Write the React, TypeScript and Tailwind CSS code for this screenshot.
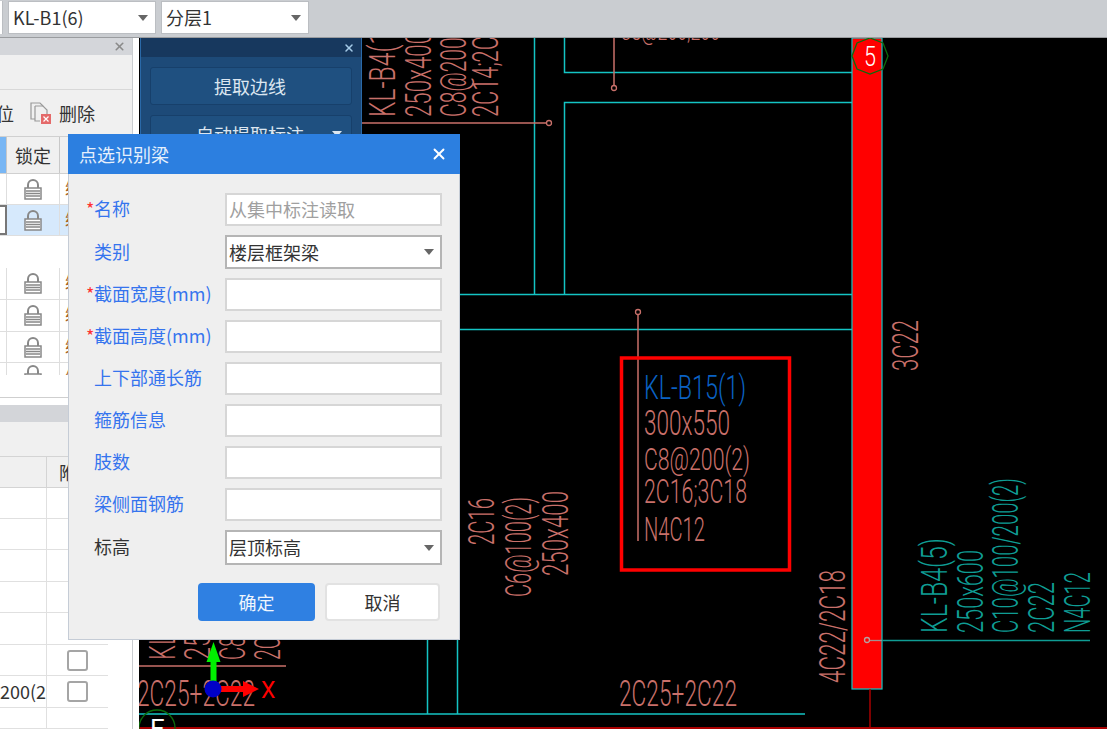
import React from "react";
import { X } from "lucide-react";

const PINK = "#c9706a";
const TEAL = "#0f9d94";
const CYAN = "#14c4c4";

function Caret({ className = "" }: { className?: string }) {
  return (
    <svg width="10" height="6" viewBox="0 0 10 6" className={className}>
      <polygon points="0,0 10,0 5,6" fill="#666" />
    </svg>
  );
}

function LockIcon() {
  return (
    <svg width="18" height="21" viewBox="0 0 18 21" className="shrink-0">
      <path d="M4 9V6a5 5 0 0 1 10 0v3" fill="none" stroke="#888" strokeWidth="2" />
      <rect x="1" y="9" width="16" height="11" fill="#fff" stroke="#888" strokeWidth="1.5" />
      <path d="M2 12h14M2 14.5h14M2 17h14" stroke="#888" strokeWidth="1.3" />
    </svg>
  );
}

function DeleteIcon() {
  return (
    <svg width="22" height="22" viewBox="0 0 22 22" className="shrink-0">
      <path d="M5 17H1V1h9l3 3" fill="none" stroke="#999" strokeWidth="1.2" />
      <path d="M5 4h8l4 4v4M5 4v15h5" fill="none" stroke="#999" strokeWidth="1.2" />
      <rect x="11" y="12" width="10" height="10" fill="#e46a6a" />
      <path d="M13.5 14.5l5 5M18.5 14.5l-5 5" stroke="#fff" strokeWidth="1.2" />
    </svg>
  );
}

function ToolSelect({ label, width }: { label: string; width: string }) {
  return (
    <div className={`flex h-[33px] items-center justify-between border border-[#bbbec2] bg-white pl-[4px] pr-[7px] text-[18px] text-[#333] ${width}`}>
      <span>{label}</span>
      <Caret />
    </div>
  );
}

// cad annotation text, squeezed to the width it has in the drawing
function CadText({ x, y, len, size = 36, color = PINK, vertical = false, children }: {
  x: number;
  y: number;
  len: number;
  size?: number;
  color?: string;
  vertical?: boolean;
  children: string;
}) {
  return (
    <text
      x={x}
      y={y}
      textLength={len}
      lengthAdjust="spacingAndGlyphs"
      fontSize={size}
      fontWeight={300}
      fill={color}
      fontFamily="Roboto, 'Liberation Sans', sans-serif"
      transform={vertical ? `rotate(-90 ${x} ${y})` : undefined}
    >
      {children}
    </text>
  );
}

function Drawing() {
  return (
    <svg width="968" height="691" viewBox="139 38 968 691" className="block">
      <g stroke={CYAN} strokeWidth="1.5" fill="none">
        <path d="M534.5 38V295M564.5 38V72.5H852M564.5 295V102.5H852" />
        <path d="M139 294.5H852M139 329.5H852" />
        <path d="M427.5 640V714M457.5 640V714M139 714H805" />
      </g>
      <rect x="852" y="38" width="30" height="651" fill="#ff0000" stroke={CYAN} strokeWidth="1.2" />
      <path d="M870 689V729" stroke="#a80000" strokeWidth="1.5" />
      <path d="M139 728H1107" stroke="#a80000" strokeWidth="2" />

      <g stroke={PINK} fill="none">
        <path d="M362 123H546M614 38V85.5M638 315V541M139 666H286" strokeWidth="1.5" />
        <circle cx="549" cy="123" r="2.5" strokeWidth="1.3" />
        <circle cx="614" cy="88" r="2.5" strokeWidth="1.3" />
        <circle cx="638" cy="312" r="2.5" strokeWidth="1.3" />
      </g>

      <polygon points="870,38 883,43 888,56 883,69 870,74 857,69 852,56 857,43" fill="none" stroke="#0b6b0b" strokeWidth="1.3" />
      <text x="864" y="66" fontSize="27" fontWeight={300} fill="#fff" fontFamily="Roboto, sans-serif" textLength="12" lengthAdjust="spacingAndGlyphs">5</text>
      <circle cx="157" cy="728" r="18" fill="none" stroke="#0b6b0b" strokeWidth="1.3" />
      <text x="150" y="738" fontSize="26" fill="#fff" fontFamily="Roboto, sans-serif">E</text>

      <CadText x={395} y={117} len={94} vertical>KL-B4(1)</CadText>
      <CadText x={431} y={117} len={85} vertical>250x400</CadText>
      <CadText x={466} y={117} len={105} vertical>C8@200(2)</CadText>
      <CadText x={498} y={117} len={105} vertical>2C14;2C16</CadText>
      <CadText x={620} y={40} len={100} size={26}>C8@200;200</CadText>

      <rect x="621.5" y="358" width="168" height="212" fill="none" stroke="#ff0000" strokeWidth="3.5" />
      <CadText x={644} y={399} len={102} size={33} color="#0a62c4">KL-B15(1)</CadText>
      <CadText x={644} y={435} len={86} size={35}>300x550</CadText>
      <CadText x={644} y={470} len={106} size={32}>C8@200(2)</CadText>
      <CadText x={644} y={503} len={103} size={33}>2C16;3C18</CadText>
      <CadText x={644} y={541} len={61} size={34}>N4C12</CadText>

      <CadText x={494} y={545} len={47} vertical>2C16</CadText>
      <CadText x={531} y={597} len={100} vertical>C6@100(2)</CadText>
      <CadText x={568} y={576} len={85} vertical>250x400</CadText>
      <CadText x={918} y={371} len={51} vertical>3C22</CadText>
      <CadText x={845} y={683} len={113} vertical>4C22/2C18</CadText>
      <CadText x={619} y={706} len={118}>2C25+2C22</CadText>

      <path d="M880 640.5H1090" stroke={TEAL} strokeWidth="1.5" />
      <circle cx="867" cy="640" r="2.5" fill="none" stroke="#b9a0a0" strokeWidth="1.3" />
      <path d="M870 640.5H882" stroke="#a09090" strokeWidth="1.3" />
      <CadText x={947} y={633} len={95} color={TEAL} vertical>KL-B4(5)</CadText>
      <CadText x={983} y={633} len={83} color={TEAL} vertical>250x600</CadText>
      <CadText x={1018} y={633} len={155} color={TEAL} vertical>C10@100/200(2)</CadText>
      <CadText x={1054} y={633} len={51} color={TEAL} vertical>2C22</CadText>
      <CadText x={1090} y={633} len={61} color={TEAL} vertical>N4C12</CadText>

      <CadText x={175} y={660} len={90} vertical>KL-B1(6)</CadText>
      <CadText x={210} y={660} len={90} vertical>250x500</CadText>
      <CadText x={245} y={660} len={100} vertical>C8@200(2)</CadText>
      <CadText x={280} y={660} len={100} vertical>2C25+2C22</CadText>
      <CadText x={137} y={706} len={118}>2C25+2C22</CadText>

      {/* ucs axis */}
      <path d="M210.5 690V662H206.5L213.5 642L220.5 662H216.5V690Z" fill="#00f000" />
      <path d="M220 686H243V681L259 689L243 697V692H220Z" fill="#ff0000" />
      <circle cx="213" cy="689" r="8.5" fill="#0000c8" />
      <text x="261" y="698" fontSize="23" fill="#ff0000" fontFamily="Roboto, sans-serif">X</text>
    </svg>
  );
}

function ExtractPanel() {
  return (
    <div className="absolute left-px top-0 flex h-[460px] w-[222px] flex-col border-x border-[#2a69a8] bg-[#1d4a78] text-[18px] text-[#dce6f0]">
      <div className="flex h-[19px] items-center justify-end bg-[#17385e] pr-[6px]">
        <X size={12} strokeWidth={3} className="text-[#a5cbe8]" />
      </div>
      <div className="flex flex-col gap-[10px] pl-[9px] pr-[9px] pt-[10px]">
        <div className="flex h-[38px] items-center justify-center rounded-[3px] border border-[#17406b] bg-[#1f5080] pr-[2px]">
          提取边线
        </div>
        <div className="relative flex h-[38px] items-center justify-center rounded-[3px] border border-[#17406b] bg-[#1f5080] pr-[2px]">
          自动提取标注
          <svg width="10" height="6" viewBox="0 0 10 6" className="absolute right-[9px] top-[15px]">
            <polygon points="0,0 10,0 5,6" fill="#dce6f0" />
          </svg>
        </div>
      </div>
    </div>
  );
}

const upperRows = [
  { h: "h-[31px]", lock: true },
  { h: "h-[31px]", lock: true, selected: true },
  { h: "h-[32px]", blank: true },
  { h: "h-[32px]", lock: true },
  { h: "h-[32px]", lock: true },
  { h: "h-[31px]", lock: true },
  { h: "h-[12px]", lock: true, cut: true },
];

const lowerRows = [
  { h: "h-[31px]" },
  { h: "h-[31px]" },
  { h: "h-[32px]" },
  { h: "h-[31px]" },
  { h: "h-[32px]" },
  { h: "h-[31px]", check: true },
  { h: "h-[32px]", check: true, text: "200(2" },
  { h: "h-[21px]" },
];

function LeftPanel() {
  return (
    <div className="flex h-full w-[133px] shrink-0 flex-col overflow-hidden border-r border-[#c9ccd0] bg-white text-[18px] text-[#333]">
      <div className="flex h-[17px] shrink-0 items-center justify-end bg-[#d4d6da] pr-[6px]">
        <X size={13} strokeWidth={3} className="text-[#8a8a8a]" />
      </div>
      <div className="h-[35px] shrink-0 border-b border-[#d8d8d8] bg-[#f0f0f0]" />
      <div className="flex h-[47px] shrink-0 items-center justify-end gap-[7px] whitespace-nowrap border-b border-[#d0d0d0] bg-[#f0f0f0] pr-[37px]">
        <span className="mr-[9px] shrink-0">定位</span>
        <DeleteIcon />
        <span className="shrink-0">删除</span>
      </div>
      <div className="flex h-[37px] w-[190px] shrink-0 border-b border-[#d0d0d0] bg-[#f0f0f0]">
        <div className="w-[7px] border-r border-[#c8c8c8] bg-[#78b6f4]" />
        <div className="flex w-[53px] items-center justify-center border-r border-[#c8c8c8]">锁定</div>
      </div>
      <div className="h-[224px] shrink-0 overflow-hidden border-b border-[#cfcfcf]">
        {upperRows.map((row, i) => (
          <div
            key={i}
            className={`flex w-[190px] ${row.h} ${row.blank || row.cut ? "" : "border-b border-[#dedede]"} ${row.selected ? "bg-[#d6e9fc]" : "bg-white"}`}
          >
            {row.blank ? null : (
              <>
                <div className={`w-[7px] ${row.selected ? "border-y-2 border-r-2 border-[#777] bg-white" : "border-r border-[#dedede]"}`} />
                <div className={`flex w-[53px] justify-center overflow-hidden border-r border-[#dedede] ${row.cut ? "items-start pt-[2px]" : "items-center"}`}>
                  <LockIcon />
                </div>
                <div className={`pl-[5px] text-[#a8641e] ${row.cut ? "overflow-hidden" : ""}`}>编</div>
              </>
            )}
          </div>
        ))}
      </div>
      <div className="h-[7px] shrink-0 bg-white" />
      <div className="h-[17px] shrink-0 bg-[#d3d5d9]" />
      <div className="h-[34px] shrink-0 bg-[#f0f0f0]" />
      <div className="flex h-[32px] shrink-0 border-y border-[#d4d4d4] bg-[#f0f0f0]">
        <div className="w-[47px] border-r border-[#d4d4d4]" />
        <div className="flex items-center whitespace-nowrap pl-[12px]">附加</div>
      </div>
      {lowerRows.map((row, i) => (
        <div key={i} className={`flex w-[108px] shrink-0 border-b border-[#e0e0e0] ${row.h}`}>
          <div className="flex w-[47px] items-center overflow-hidden whitespace-nowrap border-r border-[#e0e0e0]">
            {row.text}
          </div>
          <div className="flex flex-1 items-center justify-center">
            {row.check ? <div className="size-[21px] rounded-[3px] border-2 border-[#a5a5a5] bg-white" /> : null}
          </div>
        </div>
      ))}
    </div>
  );
}

const fields = [
  { label: "名称", required: true, placeholder: "从集中标注读取", h: "h-[33px]" },
  { label: "类别", value: "楼层框架梁", select: true, h: "h-[34px]" },
  { label: "截面宽度(mm)", required: true, h: "h-[33px]" },
  { label: "截面高度(mm)", required: true, h: "h-[33px]" },
  { label: "上下部通长筋", h: "h-[33px]" },
  { label: "箍筋信息", h: "h-[33px]" },
  { label: "肢数", h: "h-[33px]" },
  { label: "梁侧面钢筋", h: "h-[33px]" },
  { label: "标高", value: "层顶标高", select: true, dark: true, h: "h-[35px]" },
];

function Dialog() {
  return (
    <div className="absolute left-[68px] top-[134px] flex h-[506px] w-[392px] flex-col border-x border-b border-[#c5ccd6] bg-[#efefef] text-[18px]">
      <div className="-mx-px flex h-[40px] shrink-0 items-center justify-between bg-[#2c7fe0] pl-[11px] pr-[12px] text-[#e6f0fc]">
        <span>点选识别梁</span>
        <X size={18} strokeWidth={2.5} className="text-white" />
      </div>
      <div className="flex flex-col gap-[9px] pl-[17px] pr-[17px] pt-[19px]">
        {fields.map((f) => (
          <div key={f.label} className="flex items-center">
            <div className={`flex w-[139px] shrink-0 whitespace-nowrap pb-[2px] ${f.dark ? "text-[#333]" : "text-[#3574ee]"}`}>
              <span className="w-[8px] text-[#ff3333]">{f.required ? "*" : ""}</span>
              <span>{f.label}</span>
            </div>
            <div
              className={`flex flex-1 items-center justify-between border-2 bg-white pl-[2px] pr-[6px] ${f.h} ${f.select ? "border-[#b5b5b5] text-[#333]" : "border-[#d6d6d6] text-[#a0a0a0]"}`}
            >
              <span>{f.value ?? f.placeholder}</span>
              {f.select ? <Caret /> : null}
            </div>
          </div>
        ))}
        <div className="mt-[9px] flex justify-end gap-[10px] pr-[2px]">
          <button className="h-[38px] w-[117px] rounded-[4px] bg-[#2f80e2] text-[#eef5fd]">确定</button>
          <button className="h-[38px] w-[115px] rounded-[4px] border-2 border-[#e2e2e2] bg-white text-[#333]">取消</button>
        </div>
      </div>
    </div>
  );
}

export default function App() {
  return (
    <div className="relative flex h-[729px] w-[1107px] flex-col overflow-hidden bg-white font-['Noto_Sans_CJK_SC','Noto_Sans',sans-serif]">
      <div className="flex h-[38px] shrink-0 gap-[5px] border-b border-[#9a9c9f] bg-[#cacdd1] pt-px">
        <div className="h-[33px] w-[3px] border-r border-[#bbbec2] bg-white" />
        <ToolSelect label="KL-B1(6)" width="w-[148px]" />
        <ToolSelect label="分层1" width="w-[148px]" />
      </div>
      <div className="flex min-h-0 flex-1">
        <LeftPanel />
        <div className="w-[6px] shrink-0 bg-white" />
        <div className="relative flex-1 overflow-hidden bg-black">
          <Drawing />
          <ExtractPanel />
        </div>
      </div>
      <Dialog />
    </div>
  );
}
